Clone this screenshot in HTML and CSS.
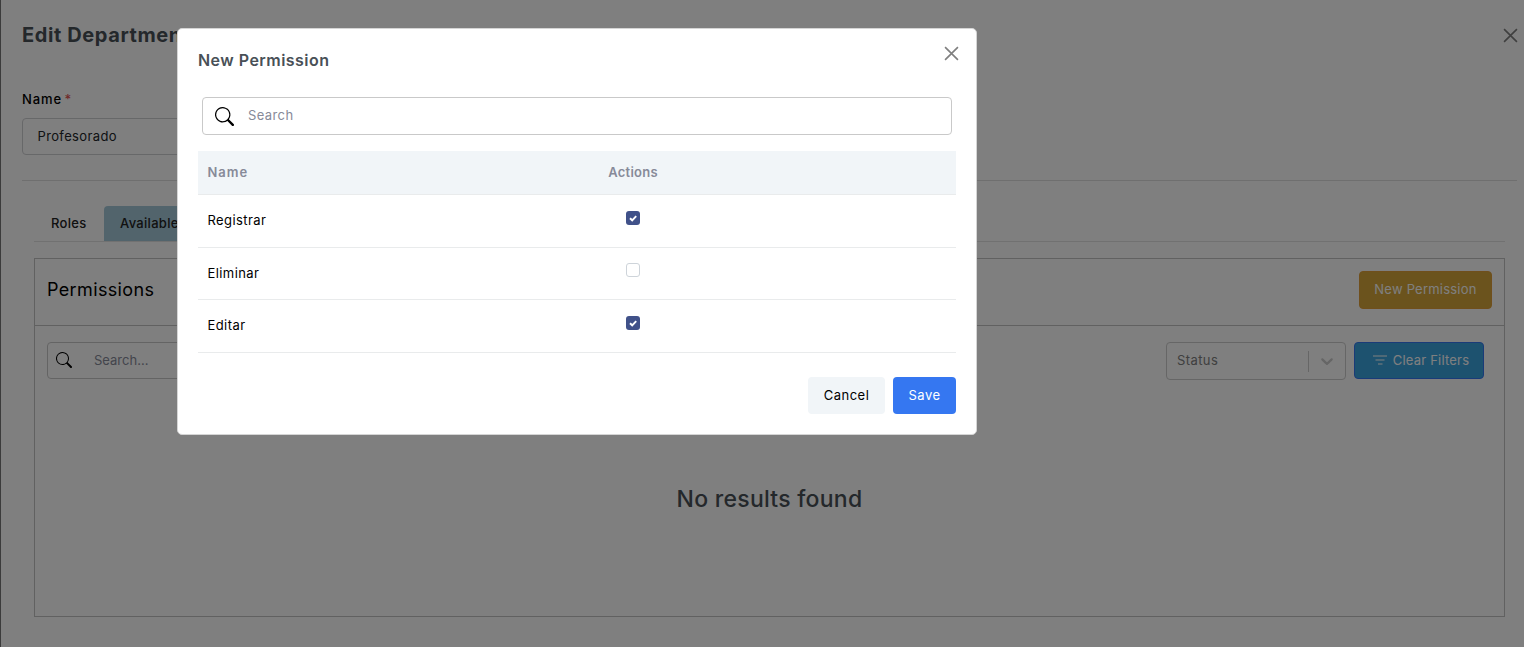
FILE: index.html
```html
<!DOCTYPE html>
<html lang="en">
<head>
<meta charset="utf-8">
<title>Edit Department</title>
<link rel="stylesheet" href="styles.css">
</head>
<body>
<main class="drawer">
  <header class="drawer-head">
    <h1><span class="t-title">Edit Department</span></h1>
    <svg class="close" viewBox="0 0 14 14"><path d="M1 1l12 12M13 1L1 13"/></svg>
  </header>
  <section class="field">
    <label><span class="t-label">Name</span> <span class="req">*</span></label>
    <div class="input"><span class="t-value">Profesorado</span></div>
  </section>
  <div class="content">
    <nav class="tabs">
      <a class="tab tab-roles"><span class="t-roles">Roles</span></a>
      <a class="tab active"><span class="t-avail">Available</span></a>
    </nav>
    <section class="card">
      <header class="card-head">
        <h2><span class="t-perm">Permissions</span></h2>
        <button class="btn gold"><span class="t-newbtn">New Permission</span></button>
      </header>
      <div class="toolbar">
        <div class="search small">
          <svg class="icon" viewBox="0 0 16 16"><path d="M11.742 10.344a6.5 6.5 0 1 0-1.397 1.398h-.001c.03.04.062.078.098.115l3.85 3.85a1 1 0 0 0 1.415-1.414l-3.85-3.85a1.007 1.007 0 0 0-.115-.1zM12 6.5a5.5 5.5 0 1 1-11 0 5.5 5.5 0 0 1 11 0z"/></svg>
          <span class="t-search2">Search...</span>
        </div>
        <div class="select">
          <span class="t-status">Status</span>
          <i class="divider"></i>
          <svg class="chevron" viewBox="0 0 20 20"><path d="M4.516 7.548c.436-.446 1.043-.481 1.576 0L10 11.295l3.908-3.747c.533-.481 1.141-.446 1.574 0 .436.445.408 1.197 0 1.615-.406.418-4.695 4.502-4.695 4.502a1.095 1.095 0 0 1-1.576 0S4.924 9.581 4.516 9.163s-.436-1.17 0-1.615z"/></svg>
        </div>
        <button class="btn blue">
          <svg class="filter" viewBox="0 0 14 10"><path d="M0 1h14M2.5 5h9M5 9h4.5"/></svg>
          <span class="t-clear">Clear Filters</span>
        </button>
      </div>
      <p class="empty"><span class="t-empty">No results found</span></p>
    </section>
  </div>
</main>
<div class="backdrop">
  <div class="modal">
    <header class="modal-head">
      <h3><span class="t-modal">New Permission</span></h3>
      <svg class="close" viewBox="0 0 14 14"><path d="M1 1l12 12M13 1L1 13"/></svg>
    </header>
    <div class="search large">
      <svg class="icon" viewBox="0 0 16 16"><path d="M11.742 10.344a6.5 6.5 0 1 0-1.397 1.398h-.001c.03.04.062.078.098.115l3.85 3.85a1 1 0 0 0 1.415-1.414l-3.85-3.85a1.007 1.007 0 0 0-.115-.1zM12 6.5a5.5 5.5 0 1 1-11 0 5.5 5.5 0 0 1 11 0z"/></svg>
      <span class="t-search">Search</span>
    </div>
    <div class="table">
      <div class="row head"><span class="t-th1">Name</span><span class="cell"><span class="t-th2">Actions</span></span></div>
      <div class="row"><span class="t-row">Registrar</span><span class="cell"><i class="check on"><svg viewBox="0 0 14 14"><path d="M4 7.2l2.2 2.1 4-4.2"/></svg></i></span></div>
      <div class="row short"><span class="t-row">Eliminar</span><span class="cell"><i class="check"></i></span></div>
      <div class="row"><span class="t-row">Editar</span><span class="cell"><i class="check on"><svg viewBox="0 0 14 14"><path d="M4 7.2l2.2 2.1 4-4.2"/></svg></i></span></div>
    </div>
    <footer class="modal-foot">
      <button class="btn light"><span class="t-cancel">Cancel</span></button>
      <button class="btn primary"><span class="t-save">Save</span></button>
    </footer>
  </div>
</div>
</body>
</html>
```
FILE: styles.css
```css
* { box-sizing: border-box; margin: 0; padding: 0; }
body {
  height: 647px;
  overflow: hidden;
  background: #fff;
  color: #000;
  font: 13px/20px Inter, "Liberation Sans", sans-serif;
}
button { font: inherit; }
svg { display: block; flex: none; }
span { white-space: nowrap; }

.drawer { height: 647px; border-left: 1px solid #777; padding-left: 21px; }
.drawer-head { display: flex; justify-content: space-between; height: 89px; padding: 20px 6px 0 0; }
h1 { font-size: 20px; line-height: 30px; font-weight: 700; color: #495057; }
.close { width: 15px; height: 15px; fill: none; stroke: #7f7f7f; stroke-width: 1.5; }
.drawer-head .close { margin-top: 8px; }
.field { height: 92px; margin-right: 7px; border-bottom: 1px solid #dedede; }
.field label { display: block; height: 29px; font-weight: 500; }
.req { margin-left: -1px; color: #e05555; }
.input { width: 735px; height: 37px; padding: 7px 14px; border: 1px solid #ced0d3; border-radius: 4px; color: #212529; }

.content { margin: 25px 19px 0 12px; }
.tabs { display: flex; height: 36px; border-bottom: 1px solid #e2e2e2; }
.tab { height: 35px; padding: 7px 16px; font-weight: 500; color: #222; border-radius: 4px 4px 0 0; }
.tab-roles { width: 70px; padding-left: 17px; }
.tab.active { width: 180px; background: #a5c9d9; }
.card { height: 359px; margin-top: 16px; border: 1px solid #c2c2c2; }
.card-head { display: flex; justify-content: space-between; height: 67px; padding: 12px; border-bottom: 1px solid #c2c2c2; }
h2 { font-size: 18px; line-height: 38px; font-weight: 400; }
.btn { display: flex; align-items: center; justify-content: center; height: 37px; padding-bottom: 2px; border: 0; border-radius: 4px; }
.gold { width: 133px; height: 38px; background: #d6a63a; border: 1px solid #e09f38; color: #fff; }
.toolbar { display: flex; padding: 16px 20px 0 12px; }
.search { display: flex; align-items: center; border: 1px solid #c9c9c9; border-radius: 4px; color: #878a99; }
.search span { padding-bottom: 2px; }
.small { width: 300px; height: 37px; padding-left: 8px; gap: 22px; }
.small .icon { width: 16px; height: 16px; margin-bottom: 1px; }
.select { display: flex; align-items: center; width: 180px; height: 38px; margin: 0 8px 0 auto; padding-left: 10px; border: 1px solid #ccc; border-radius: 4px; color: #808080; }
.select span { padding-bottom: 2px; }
.divider { width: 1px; height: 21px; margin: 0 8px 0 auto; background: #ccc; }
.chevron { width: 20px; height: 20px; margin-right: 8px; fill: #ccc; }
.blue { width: 130px; gap: 6px; padding-left: 4px; background: #3ba4df; border: 1px solid #3577f1; color: #fff; }
.filter { width: 14px; height: 10px; fill: none; stroke: #fff; stroke-width: 1.2; }
.empty { margin-top: 104px; text-align: center; font-size: 23px; line-height: 30px; font-weight: 500; color: #495057; }

.backdrop { position: absolute; inset: 0; background: rgba(0, 0, 0, .5); }
.modal { width: 800px; height: 407px; margin: 28px 0 0 177px; padding: 0 20px; background: #fff; border: 1px solid #d5d5d5; border-radius: 5px; }
.modal-head { display: flex; justify-content: space-between; height: 68px; padding: 19px 0 0; }
h3 { font-size: 16px; line-height: 24px; font-weight: 600; color: #495057; }
.modal-head .close { margin: -2px -3px 0 0; }
.large { height: 38px; margin: 0 4px 16px; padding-left: 12px; gap: 14px; }
.large .icon { width: 19px; height: 19px; }
.row { display: grid; grid-template-columns: 401px 50px; height: 53px; padding: 15px 0 0 9px; border-bottom: 1px solid #e9ebec; }
.row.short { height: 52px; }
.row.head { height: 44px; padding-top: 11px; background: #f1f5f8; color: #878a99; font-weight: 600; }
.cell { display: flex; justify-content: center; }
.check { width: 14px; height: 14px; margin-top: 1px; border: 1px solid #ced4da; border-radius: 3px; }
.short .check { margin-top: 0; }
.on { border: 0; background: #405189; }
.on svg { fill: none; stroke: #fff; stroke-width: 1.9; }
.modal-foot { display: flex; justify-content: flex-end; gap: 8px; padding-top: 24px; }
.light { width: 77px; background: #f1f5f8; color: #000; }
.primary { width: 63px; background: #3577f1; color: #fff; }

/* Tracking per label */
.t-title { letter-spacing: .6px; }
.t-label { letter-spacing: .9px; }
.t-value { padding-left: .5px; letter-spacing: .36px; }
.t-roles, .t-avail { letter-spacing: .3px; }
.t-perm { letter-spacing: .36px; }
.t-newbtn { letter-spacing: .22px; }
.t-status { letter-spacing: .4px; }
.t-clear { letter-spacing: .2px; }
.t-empty { letter-spacing: .25px; }
.t-modal { letter-spacing: .47px; }
.t-search { letter-spacing: .4px; }
.t-th1 { padding-left: .5px; letter-spacing: 1px; }
.t-th2 { letter-spacing: .25px; }
.t-row { padding-left: .5px; letter-spacing: .42px; }
.t-cancel { letter-spacing: .5px; }
.t-save { letter-spacing: .5px; }
```
